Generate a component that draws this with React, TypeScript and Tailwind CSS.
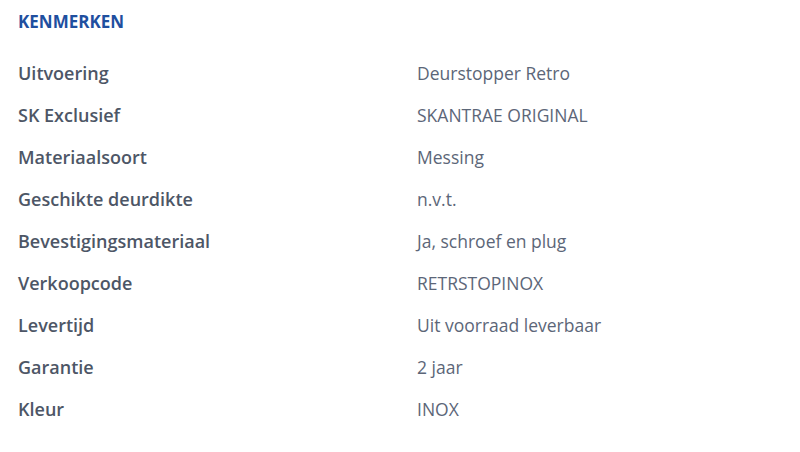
import React from 'react';

const specs: [string, string][] = [
  ['Uitvoering', 'Deurstopper Retro'],
  ['SK Exclusief', 'SKANTRAE ORIGINAL'],
  ['Materiaalsoort', 'Messing'],
  ['Geschikte deurdikte', 'n.v.t.'],
  ['Bevestigingsmateriaal', 'Ja, schroef en plug'],
  ['Verkoopcode', 'RETRSTOPINOX'],
  ['Levertijd', 'Uit voorraad leverbaar'],
  ['Garantie', '2 jaar'],
  ['Kleur', 'INOX'],
];

const App: React.FC = () => {
  return (
    <div className="w-[800px] h-[452px] bg-white px-[18px] font-['Open_Sans',sans-serif]">
      <h2 className="h-[52px] pt-[11px] text-[17px] leading-[22px] font-bold text-[#1f4f9f]">
        KENMERKEN
      </h2>
      <dl>
        {specs.map(([label, value]) => (
          <div key={label} className="grid grid-cols-[399px_1fr] h-[42px] items-center">
            <dt className="text-[18px] font-semibold text-[#4d5666]">{label}</dt>
            <dd className="text-[17.5px] text-[#5c6678]">{value}</dd>
          </div>
        ))}
      </dl>
    </div>
  );
};

export default App;
